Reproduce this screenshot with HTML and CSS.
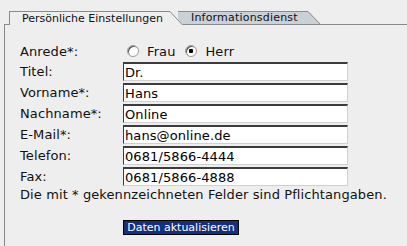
FILE: index.html
```html
<!DOCTYPE html>
<html lang="de">
<head>
    <meta charset="UTF-8">
    <title>Persönliche Einstellungen</title>
    <link rel="stylesheet" href="styles.css">
</head>
<body>
    <div class="tabs">
        <div class="tab-edge"></div>
        <div class="tab tab-active">
            <span class="tab-label">Persönliche Einstellungen</span>
            <svg class="tab-corner" width="13" height="14" viewBox="0 0 13 14">
                <polygon points="0,0 13,14 0,14" fill="#eeeeee"/>
                <line x1="0" y1="0.5" x2="12.5" y2="14" stroke="#8a8a8a" stroke-width="1"/>
            </svg>
        </div>
        <div class="tab tab-other">
            <span class="tab-label">Informationsdienst</span>
            <svg class="tab-corner" width="13" height="14" viewBox="0 0 13 14">
                <polygon points="0,0 13,13.5 0,13.5" fill="#c9d0d8"/>
                <line x1="0" y1="0.5" x2="12.5" y2="13.5" stroke="#8a8a8a" stroke-width="1"/>
                <line x1="0" y1="13.5" x2="13" y2="13.5" stroke="#8a8a8a" stroke-width="1"/>
            </svg>
        </div>
        <div class="tab-rest"></div>
    </div>
    <div class="panel">
        <form class="form">
            <span class="label">Anrede*:</span>
            <div class="radios">
                <label class="radio"><input type="radio" name="anrede" value="frau"> Frau</label>
                <label class="radio"><input type="radio" name="anrede" value="herr" checked> Herr</label>
            </div>
            <label class="label" for="titel">Titel:</label>
            <input class="field" type="text" id="titel" value="Dr.">
            <label class="label" for="vorname">Vorname*:</label>
            <input class="field" type="text" id="vorname" value="Hans">
            <label class="label" for="nachname">Nachname*:</label>
            <input class="field" type="text" id="nachname" value="Online">
            <label class="label" for="email">E-Mail*:</label>
            <input class="field" type="text" id="email" value="hans@online.de">
            <label class="label" for="telefon">Telefon:</label>
            <input class="field" type="text" id="telefon" value="0681/5866-4444">
            <label class="label" for="fax">Fax:</label>
            <input class="field" type="text" id="fax" value="0681/5866-4888">
            <p class="note">Die mit * gekennzeichneten Felder sind Pflichtangaben.</p>
            <button type="submit" class="submit">Daten aktualisieren</button>
        </form>
    </div>
</body>
</html>
```

FILE: styles.css
```css
body { margin: 0; background: #eeeeee; font-family: "DejaVu Sans", Verdana, sans-serif; color: #111; }

.tabs { display: flex; margin: 11px 0 0 4px; height: 14px; }
.tab-edge { width: 5px; border-bottom: 1px solid #8a8a8a; }
.tab { display: flex; position: relative; }
.tab-label { font-size: 11px; line-height: 13px; border-top: 1px solid #8a8a8a; white-space: nowrap; }
.tab-corner { display: block; flex: none; }
.tab-active { z-index: 2; }
.tab-active .tab-label { border-left: 1px solid #8a8a8a; padding: 0 7px 0 12px; }
.tab-other { z-index: 1; margin-left: -5px; }
.tab-other .tab-label { background: #c9d0d8; border-bottom: 1px solid #8a8a8a; line-height: 12px; padding: 0 10px 0 13px; letter-spacing: 0.2px; }
.tab-rest { flex: 1; border-bottom: 1px solid #8a8a8a; }

.panel { border-left: 1px solid #8a8a8a; margin-left: 4px; min-height: calc(100vh - 25px); padding: 16px 0 0 15px; box-sizing: border-box; }

.form { display: grid; grid-template-columns: 103px 225px; font-size: 13px; letter-spacing: 0.1px; }
.label { align-self: center; }
.radios { display: flex; align-items: center; height: 20px; gap: 10px; padding-left: 4px; }
.radio { display: flex; align-items: center; gap: 8px; }
.radio input { appearance: none; margin: 0; width: 12px; height: 12px; border-radius: 50%; border: 1px solid #9a9a9a; box-shadow: inset 1px 1px 0 #505050; background: #fff; }
.radio input:checked { background: radial-gradient(circle, #000 0 2px, #fff 2.5px); }
.field { box-sizing: border-box; width: 225px; height: 19px; margin: 1px 0; padding: 0 1px; font: 13px "DejaVu Sans", Verdana, sans-serif; letter-spacing: 0.1px; color: #000; background: #fff; border-style: solid; border-width: 2px 1px 1px 1px; border-color: #3c3c3c #d0d0d0 #d0d0d0 #3c3c3c; outline: none; }
.note { grid-column: 1 / 3; margin: 0; line-height: 16px; white-space: nowrap; }
.submit { grid-column: 2; justify-self: start; margin-top: 17px; width: 116px; height: 15px; padding: 0; font: 11px "DejaVu Sans", Verdana, sans-serif; letter-spacing: 0; color: #fff; background: #15307a; border: 1px solid #000; cursor: pointer; }
```
